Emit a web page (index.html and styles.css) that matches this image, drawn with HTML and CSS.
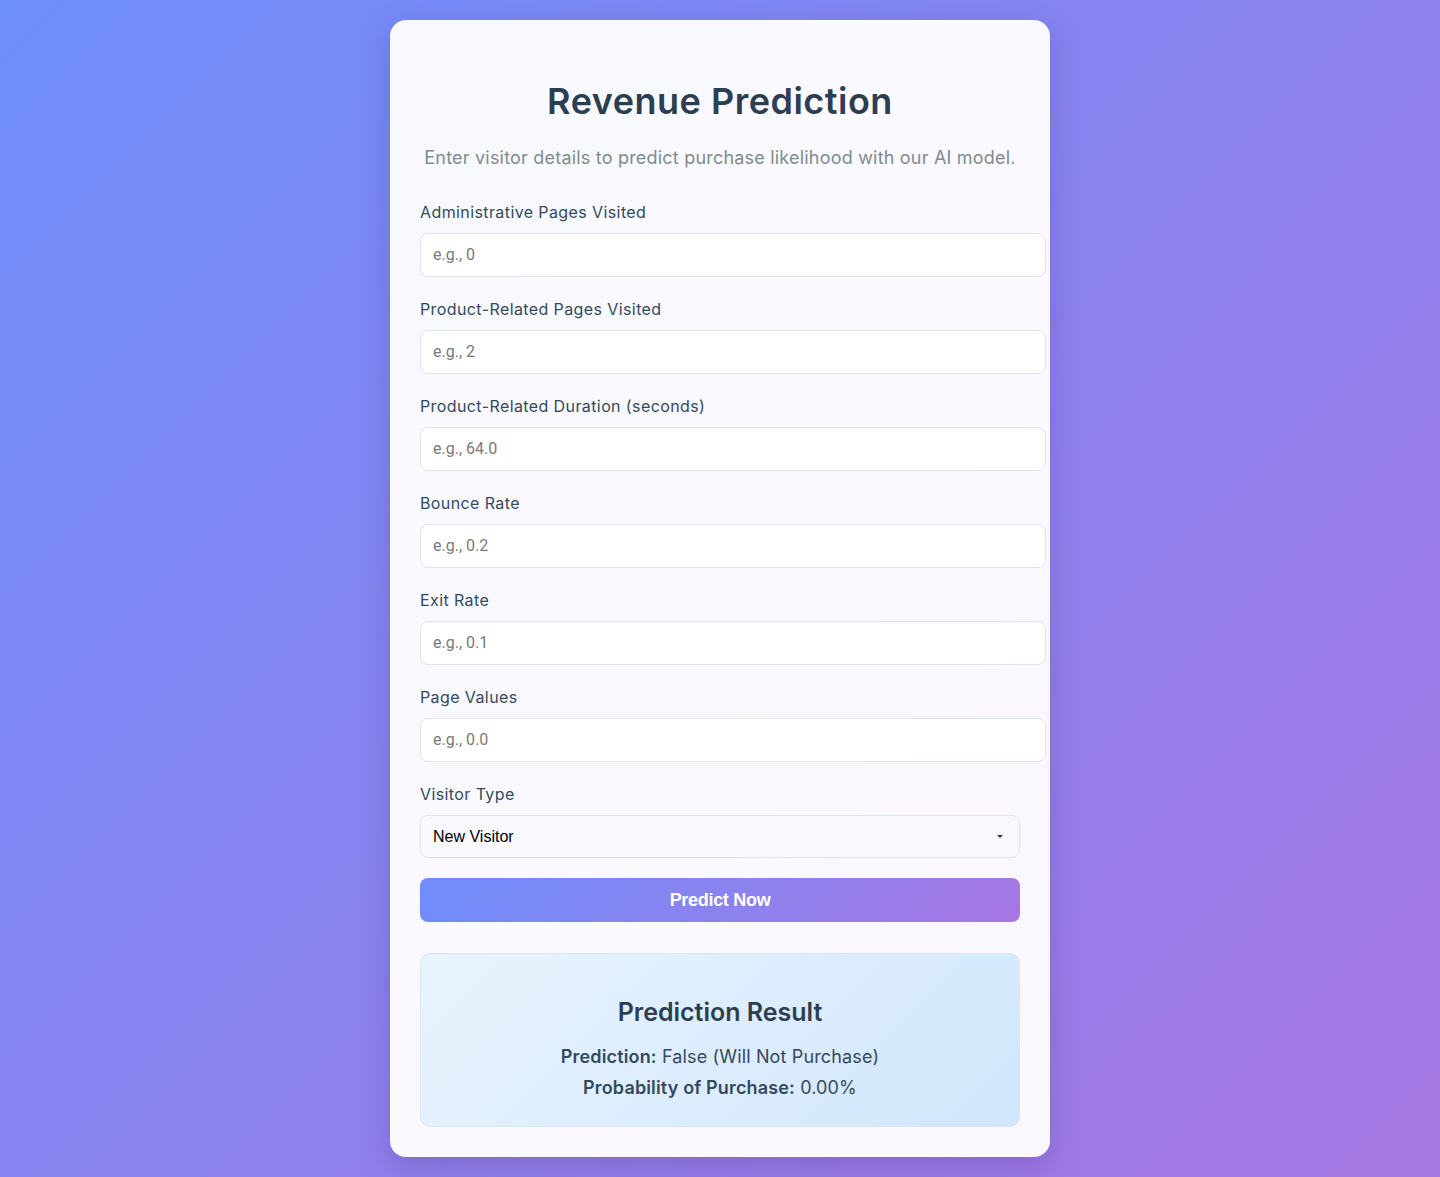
FILE: index.html
```html
<!DOCTYPE html>
<html lang="en">
<head>
<meta charset="utf-8">
<title>Revenue Prediction</title>
<link rel="stylesheet" href="styles.css">
</head>
<body>
<div class="card">
  <h1 class="title">Revenue Prediction</h1>
  <p class="subtitle">Enter visitor details to predict purchase likelihood with our AI model.</p>
  <form class="form">
    <div class="group">
      <label class="label">Administrative Pages Visited</label>
      <input class="input" type="text" placeholder="e.g., 0">
    </div>
    <div class="group">
      <label class="label">Product-Related Pages Visited</label>
      <input class="input" type="text" placeholder="e.g., 2">
    </div>
    <div class="group">
      <label class="label">Product-Related Duration (seconds)</label>
      <input class="input" type="text" placeholder="e.g., 64.0">
    </div>
    <div class="group">
      <label class="label">Bounce Rate</label>
      <input class="input" type="text" placeholder="e.g., 0.2">
    </div>
    <div class="group">
      <label class="label">Exit Rate</label>
      <input class="input" type="text" placeholder="e.g., 0.1">
    </div>
    <div class="group">
      <label class="label">Page Values</label>
      <input class="input" type="text" placeholder="e.g., 0.0">
    </div>
    <div class="group">
      <label class="label">Visitor Type</label>
      <div class="select-wrap">
        <select class="select">
          <option>New Visitor</option>
          <option>Returning Visitor</option>
          <option>Other</option>
        </select>
      </div>
    </div>
    <button class="button" type="button">Predict Now</button>
  </form>
  <div class="result">
    <h3 class="result-title">Prediction Result</h3>
    <p class="result-line"><strong>Prediction:</strong> False (Will Not Purchase)</p>
    <p class="result-line"><strong>Probability of Purchase:</strong> 0.00%</p>
  </div>
</div>
</body>
</html>
```

FILE: styles.css
```css
html, body {
  margin: 0;
  padding: 0;
}
body {
  min-height: 1177px;
  background: linear-gradient(135deg, #6e8efb 0%, #a777e3 100%);
  font-family: Inter, "Open Sans", sans-serif;
  padding: 20px 0;
  box-sizing: border-box;
}
.card {
  width: 600px;
  margin: 0 auto;
  padding: 30px;
  background: rgba(255, 255, 255, 0.95);
  border-radius: 16px;
  box-shadow: 0 10px 30px rgba(60, 40, 120, 0.25);
}
.title {
  margin: 24px 0 17px;
  text-align: center;
  font-size: 36px;
  line-height: 54px;
  font-weight: 600;
  color: #2c3e50;
  letter-spacing: 0.5px;
}
.subtitle {
  margin: 0 0 29px;
  text-align: center;
  font-size: 18px;
  line-height: 26px;
  color: #7f8c8d;
  letter-spacing: 0.2px;
}
.form {
  margin: 0;
}
.group {
  margin-bottom: 20px;
}
.label {
  display: block;
  margin-bottom: 9px;
  font-size: 16px;
  line-height: 24px;
  color: #34495e;
  letter-spacing: 0.4px;
}
.input {
  display: block;
  width: 100%;
  padding: 12px;
  margin: 0;
  font-family: Roboto, "Liberation Sans", sans-serif;
  font-size: 16px;
  line-height: 18px;
  border: 1px solid #dfe4ea;
  border-radius: 8px;
  background: #fff;
  color: #333;
  outline: none;
}
.input::placeholder {
  color: #7a7a7a;
}
.select-wrap {
  position: relative;
}
.select-wrap::after {
  content: "";
  position: absolute;
  right: 17px;
  top: 20px;
  border-left: 3px solid transparent;
  border-right: 3px solid transparent;
  border-top: 3px solid #2c3440;
  pointer-events: none;
}
.select {
  display: block;
  width: 100%;
  height: 43px;
  padding: 0 12px;
  margin: 0;
  box-sizing: border-box;
  -webkit-appearance: none;
  appearance: none;
  font-family: "Liberation Sans", Arial, sans-serif;
  font-size: 16px;
  color: #000;
  border: 1px solid #dfe4ea;
  border-radius: 8px;
  background: transparent;
  outline: none;
}
.button {
  display: block;
  width: 100%;
  height: 44px;
  margin: 0;
  border: none;
  border-radius: 8px;
  background: linear-gradient(135deg, #6e8efb 0%, #a777e3 100%);
  color: #fff;
  font-family: "Liberation Sans", Arial, sans-serif;
  font-size: 18px;
  font-weight: 700;
  letter-spacing: -0.3px;
  cursor: pointer;
}
.result {
  margin-top: 31px;
  padding: 30px 20px 19px;
  border: 1px solid #dbe5ef;
  border-radius: 10px;
  background: linear-gradient(135deg, #e8f4fe 0%, #d1e6fc 100%);
  text-align: center;
}
.result-title {
  margin: 10px 0 15px;
  font-size: 25px;
  line-height: 36px;
  font-weight: 600;
  color: #2c3e50;
  letter-spacing: 0;
}
.result-line {
  margin: 0 0 7px;
  font-size: 18px;
  line-height: 24px;
  color: #34495e;
  letter-spacing: 0.15px;
}
.result-line strong {
  font-weight: 600;
}
```
